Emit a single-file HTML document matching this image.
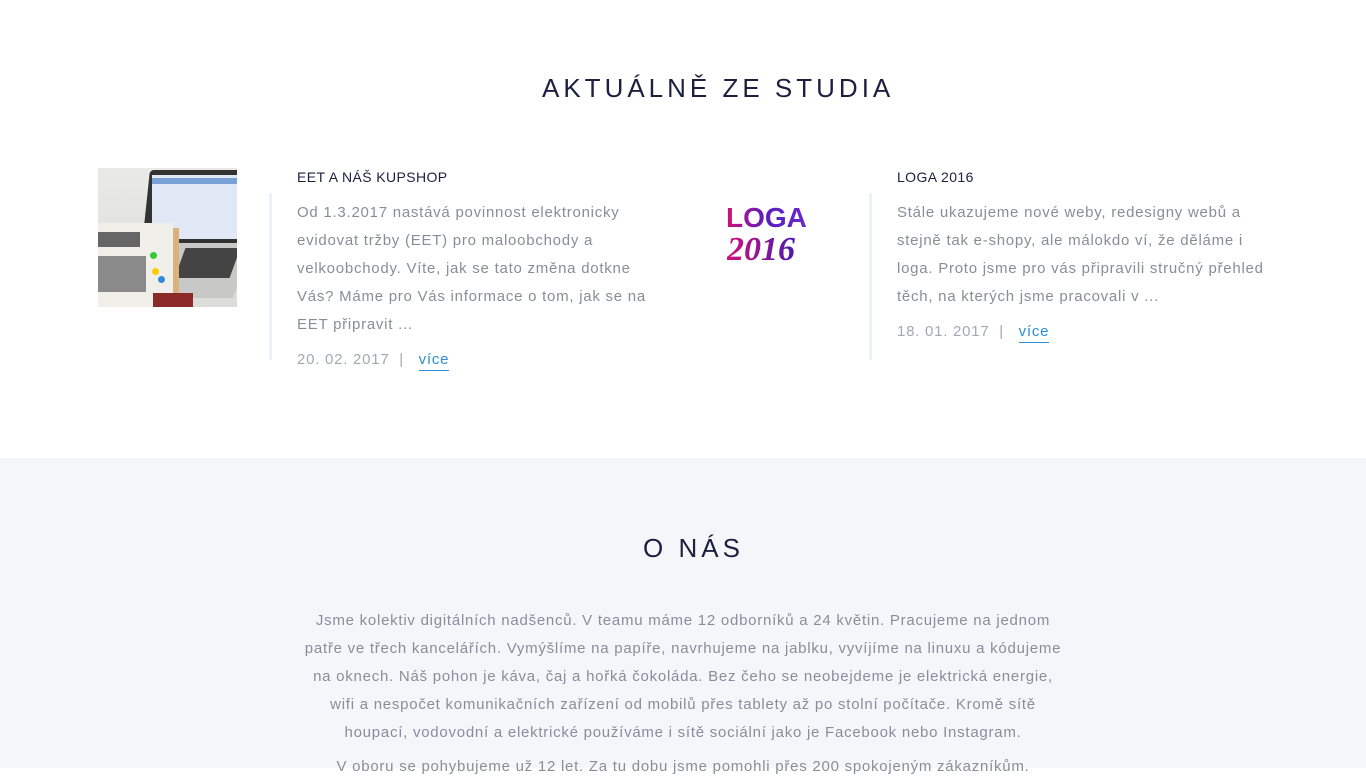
<!DOCTYPE html>
<html><head><meta charset="utf-8">
<style>
*{margin:0;padding:0;box-sizing:border-box}
html,body{width:1366px;height:768px;overflow:hidden;background:#fff;font-family:"Liberation Sans",sans-serif}
.top{position:relative;height:458px;background:#fff}
h2{position:absolute;font-weight:400;color:#1c1f3f;letter-spacing:4px;font-size:26px;white-space:nowrap}
.thumb{position:absolute;width:139px;height:139px}
.vline{position:absolute;width:3px;background:#eef2f6}
.title{position:absolute;font-size:14px;color:#1c1f3f;letter-spacing:0.4px}
.txt{position:absolute;font-size:15px;line-height:28px;color:#8a8d99;letter-spacing:0.75px;white-space:nowrap}
.meta{position:absolute;font-size:15px;color:#a4a8b4;letter-spacing:0.75px;white-space:nowrap}
.meta a{color:#2e8fd6;text-decoration:none;border-bottom:1px solid #2e8fd6;padding-bottom:2px}
.bot{position:absolute;top:458px;left:0;width:1366px;height:310px;background:#f4f7fa}
.about{position:absolute;left:183px;width:1000px;top:149px;text-align:center;font-size:15px;line-height:28px;color:#8a8d99;letter-spacing:0.75px;white-space:nowrap}
</style></head><body>
<div class="top">
<h2 style="top:73px;left:542px">AKTUÁLNĚ ZE STUDIA</h2>

<div class="thumb" style="left:98px;top:168px;background:linear-gradient(180deg,#e9e9e6,#dcdcd8);overflow:hidden">
 <div style="position:absolute;left:48px;top:2px;width:95px;height:75px;background:#333;border-radius:4px;transform:skewX(-6deg)"></div>
 <div style="position:absolute;left:54px;top:7px;width:86px;height:64px;background:#dfe8f4"></div>
 <div style="position:absolute;left:54px;top:10px;width:86px;height:6px;background:#7aa0d8"></div>
 <div style="position:absolute;left:70px;top:75px;width:75px;height:55px;background:#c8c8c6;transform:skewX(-20deg)"></div>
 <div style="position:absolute;left:82px;top:80px;width:55px;height:30px;background:#444;transform:skewX(-20deg)"></div>
 <div style="position:absolute;left:0;top:55px;width:75px;height:84px;background:#f0efe9"></div>
 <div style="position:absolute;left:0;top:64px;width:42px;height:15px;background:#666"></div>
 <div style="position:absolute;left:0;top:88px;width:48px;height:36px;background:#8a8a8a"></div>
 <div style="position:absolute;left:52px;top:84px;width:7px;height:7px;border-radius:50%;background:#3c3"></div>
 <div style="position:absolute;left:54px;top:100px;width:7px;height:7px;border-radius:50%;background:#fc0"></div>
 <div style="position:absolute;left:60px;top:108px;width:7px;height:7px;border-radius:50%;background:#38d"></div>
 <div style="position:absolute;left:75px;top:60px;width:6px;height:80px;background:#d9b27c"></div>
 <div style="position:absolute;left:55px;top:125px;width:40px;height:14px;background:#8c2a2a"></div>
</div>
<div class="vline" style="left:269px;top:193px;height:167px"></div>
<div class="title" style="left:297px;top:169px">EET A NÁŠ KUPSHOP</div>
<div class="txt" style="left:297px;top:199px">Od 1.3.2017 nastává povinnost elektronicky<br>evidovat tržby (EET) pro maloobchody a<br>velkoobchody. Víte, jak se tato změna dotkne<br>Vás? Máme pro Vás informace o tom, jak se na<br>EET připravit ...</div>
<div class="meta" style="left:297px;top:351px">20. 02. 2017 &nbsp;|&nbsp;&nbsp; <a>více</a></div>

<div style="position:absolute;left:726px;top:203px;font-size:28px;font-weight:700;background:linear-gradient(90deg,#d0127a,#5a1dbf,#6a2ac8);-webkit-background-clip:text;color:transparent;line-height:30px">LOGA</div>
<div style="position:absolute;left:727px;top:232px;font-size:34px;font-style:italic;font-weight:700;font-family:'Liberation Serif',serif;background:linear-gradient(90deg,#d0127a,#4a1ab0);-webkit-background-clip:text;color:transparent;line-height:36px">2016</div>
<div class="vline" style="left:869px;top:193px;height:167px"></div>
<div class="title" style="left:897px;top:169px">LOGA 2016</div>
<div class="txt" style="left:897px;top:199px">Stále ukazujeme nové weby, redesigny webů a<br>stejně tak e-shopy, ale málokdo ví, že děláme i<br>loga. Proto jsme pro vás připravili stručný přehled<br>těch, na kterých jsme pracovali v ...</div>
<div class="meta" style="left:897px;top:323px">18. 01. 2017 &nbsp;|&nbsp;&nbsp; <a>více</a></div>
</div>
<div class="bot">
<h2 style="top:75px;left:643px">O NÁS</h2>
<div class="about">Jsme kolektiv digitálních nadšenců. V teamu máme 12 odborníků a 24 květin. Pracujeme na jednom<br>patře ve třech kancelářích. Vymýšlíme na papíře, navrhujeme na jablku, vyvíjíme na linuxu a kódujeme<br>na oknech. Náš pohon je káva, čaj a hořká čokoláda. Bez čeho se neobejdeme je elektrická energie,<br>wifi a nespočet komunikačních zařízení od mobilů přes tablety až po stolní počítače. Kromě sítě<br>houpací, vodovodní a elektrické používáme i sítě sociální jako je Facebook nebo Instagram.<div style="margin-top:6px">V oboru se pohybujeme už 12 let. Za tu dobu jsme pomohli přes 200 spokojeným zákazníkům.</div></div>
</div>
</body></html>
